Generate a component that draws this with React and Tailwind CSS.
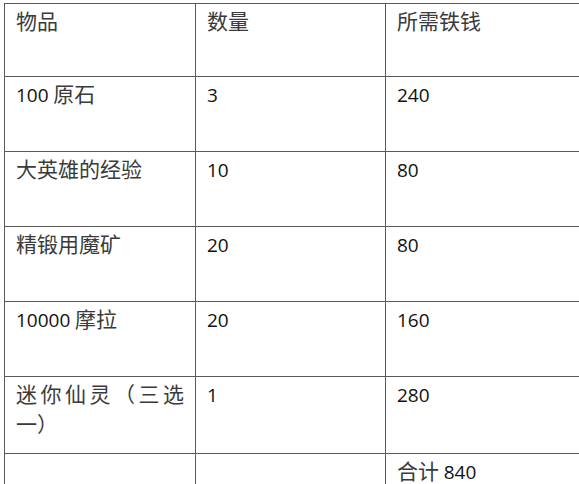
const ROWS = [
  { item: '100 原石', qty: '3', cost: '240', h: 'h-[75px]' },
  { item: '大英雄的经验', qty: '10', cost: '80', h: 'h-[75px]' },
  { item: '精锻用魔矿', qty: '20', cost: '80', h: 'h-[75px]' },
  { item: '10000 摩拉', qty: '20', cost: '160', h: 'h-[75px]' },
  { item: '迷你仙灵（三选一）', qty: '1', cost: '280', h: 'h-[77px]' },
]

// digits in a latin face, chinese in the CJK face
function Txt({ s }) {
  const parts = s.split(/(\d+)/).filter(Boolean)
  return parts.map((p, i) =>
    /^\d+$/.test(p) ? (
      <span key={i} className="text-[19px] text-[#111]" style={{ fontFamily: '"Open Sans", sans-serif' }}>{p}</span>
    ) : (
      <span key={i} className="text-[#3a3a3a]">{p}</span>
    )
  )
}

const cell = 'border border-[#5a5a5a] align-top pl-[11px] pr-[11px] pt-[1px] text-justify'

export default function App() {
  return (
    <div className="w-[579px] h-[484px] overflow-hidden bg-white pl-[4px] pt-[3px]"
      style={{ fontFamily: '"Noto Sans CJK SC", sans-serif' }}>
      <table className="border-collapse table-fixed w-[600px] text-[21px] leading-[30px]">
        <colgroup>
          <col className="w-[191px]" />
          <col className="w-[190px]" />
          <col className="w-[219px]" />
        </colgroup>
        <tbody>
          <tr className="h-[73px]">
            <td className={cell}><Txt s="物品" /></td>
            <td className={cell}><Txt s="数量" /></td>
            <td className={cell}><Txt s="所需铁钱" /></td>
          </tr>
          {ROWS.map((r, i) => (
            <tr key={i} className={r.h}>
              <td className={cell}><Txt s={r.item} /></td>
              <td className={cell}><Txt s={r.qty} /></td>
              <td className={cell}><Txt s={r.cost} /></td>
            </tr>
          ))}
          <tr className="h-[60px]">
            <td className={cell}></td>
            <td className={cell}></td>
            <td className={cell}><Txt s="合计 840" /></td>
          </tr>
        </tbody>
      </table>
    </div>
  )
}
